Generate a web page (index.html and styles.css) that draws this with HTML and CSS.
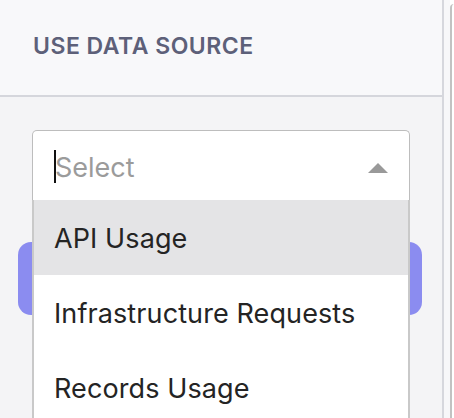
FILE: index.html
```html
<!DOCTYPE html>
<html>
<head>
<meta charset="utf-8">
<link rel="stylesheet" href="styles.css">
</head>
<body>
<div class="layout">
  <aside class="sidebar">
    <div class="header"><h2 class="title">USE DATA SOURCE</h2></div>
    <div class="content">
      <div class="select-wrap">
        <div class="select">
          <span class="cursor"></span>
          <span class="placeholder">Select</span>
          <span class="caret"></span>
        </div>
        <ul class="menu">
          <li class="option active">API Usage</li>
          <li class="option">Infrastructure Requests</li>
          <li class="option">Records Usage</li>
        </ul>
      </div>
      <div class="button"></div>
    </div>
  </aside>
  <div class="gutter"></div>
  <div class="next"></div>
</div>
</body>
</html>
```
FILE: styles.css
```css
html, body {
  margin: 0;
  padding: 0;
  background: #ffffff;
  font-family: Inter, "Noto Sans", sans-serif;
}
.layout {
  display: flex;
  width: 454px;
  height: 418px;
  overflow: hidden;
}
.sidebar {
  width: 442px;
  flex: none;
  border-right: 2px solid #d6d7dd;
  background: #f4f4f6;
  display: flex;
  flex-direction: column;
}
.header {
  height: 95px;
  border-bottom: 2px solid #d5d6dc;
  background: #f8f8fa;
  display: flex;
  align-items: center;
  padding-left: 33px;
}
.title {
  margin: 0;
  font-size: 23px;
  font-weight: 600;
  color: #5d6079;
  letter-spacing: 0.5px;
  margin-bottom: 3px;
}
.content {
  padding: 33px 32px 0 32px;
  display: flex;
  flex-direction: column;
}
.select-wrap {
  position: relative;
}
.select {
  height: 69px;
  border: 1px solid #bdbdbd;
  border-bottom: none;
  border-radius: 5px 5px 0 0;
  background: #ffffff;
  display: flex;
  align-items: center;
  padding: 0 21px 0 21px;
  position: relative;
}
.cursor {
  width: 2px;
  height: 33px;
  background: #111;
  margin-right: -1px;
  margin-top: 2px;
}
.placeholder {
  font-size: 27px;
  color: #9b9b9b;
  flex: 1;
  margin-top: 3px;
}
.caret {
  width: 0;
  height: 0;
  border-left: 10px solid transparent;
  border-right: 10px solid transparent;
  border-bottom: 10px solid #999999;
  margin-top: 5px;
}
.menu {
  position: absolute;
  top: 100%;
  left: 0;
  right: 0;
  margin: 0;
  padding: 0;
  list-style: none;
  background: #ffffff;
  border-left: 2px solid #c9c9c9;
  border-right: 2px solid #c9c9c9;
  z-index: 2;
}
.option {
  height: 75px;
  display: flex;
  align-items: center;
  padding-left: 20px;
  font-size: 27px;
  color: #242424;
  padding-top: 2px;
  box-sizing: border-box;
  letter-spacing: 0.1px;
}
.option.active {
  background: #e4e4e6;
}
.button {
  margin: 42px -12px 0 -14px;
  height: 73px;
  border-radius: 13px;
  background: #8b8cf0;
}
.gutter {
  width: 6px;
  flex: none;
  background: #f7f7f9;
}
.next {
  flex: 1;
  margin-top: 4px;
  border-left: 2px solid #c2c2c2;
  border-top-left-radius: 4px;
  background: #ffffff;
}
```
